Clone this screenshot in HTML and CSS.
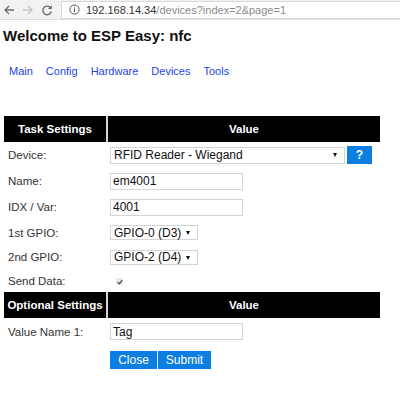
FILE: index.html
```html
<!DOCTYPE html>
<html>
<head>
<meta charset="utf-8">
<link rel="stylesheet" href="styles.css">
</head>
<body>
<div class="chrome">
  <svg class="nav-ico" width="12" height="12" viewBox="0 0 12 12"><path d="M11 6H2M6 2L2 6l4 4" fill="none" stroke="#6b6b6b" stroke-width="1.3"/></svg>
  <svg class="nav-ico fwd" width="12" height="12" viewBox="0 0 12 12"><path d="M1 6h9M6 2l4 4-4 4" fill="none" stroke="#c4c4c4" stroke-width="1.3"/></svg>
  <svg class="nav-ico" width="12" height="12" viewBox="0 0 12 12"><path d="M10 4.5A4.3 4.3 0 1 0 10.3 7.5" fill="none" stroke="#6b6b6b" stroke-width="1.3"/><path d="M10.8 1.2v3.8H7z" fill="#6b6b6b"/></svg>
  <div class="url">
    <svg width="11" height="11" viewBox="0 0 11 11"><circle cx="5.5" cy="5.5" r="4.6" fill="none" stroke="#555" stroke-width="1"/><path d="M5.5 4.6v3.6M5.5 2.6v1" stroke="#555" stroke-width="1.1"/></svg>
    <span class="host">192.168.14.34</span><span class="path">/devices?index=2&amp;page=1</span>
  </div>
</div>
<div class="page">
  <h1>Welcome to ESP Easy: nfc</h1>
  <nav class="menu">
    <a href="#">Main</a><a href="#">Config</a><a href="#">Hardware</a><a href="#">Devices</a><a href="#">Tools</a>
  </nav>
  <table class="settings">
    <tr class="head"><th class="c1">Task Settings</th><th>Value</th></tr>
    <tr class="r-dev"><td class="lbl">Device:</td><td><span class="sel wide">RFID Reader - Wiegand</span><button class="btn help">?</button></td></tr>
    <tr class="r-name"><td class="lbl">Name:</td><td><input class="txt" value="em4001"></td></tr>
    <tr class="r-idx"><td class="lbl">IDX / Var:</td><td><input class="txt" value="4001"></td></tr>
    <tr class="r-g1"><td class="lbl">1st GPIO:</td><td><span class="sel">GPIO-0 (D3)</span></td></tr>
    <tr class="r-g2"><td class="lbl">2nd GPIO:</td><td><span class="sel">GPIO-2 (D4)</span></td></tr>
    <tr class="r-send"><td class="lbl">Send Data:</td><td><span class="chk"><svg width="6" height="6" viewBox="0 0 6 6"><path d="M0.8 3.2l1.6 1.6L5.3 1" fill="none" stroke="#444" stroke-width="1.2"/></svg></span></td></tr>
    <tr class="head"><th class="c1">Optional Settings</th><th>Value</th></tr>
    <tr class="r-vn"><td class="lbl">Value Name 1:</td><td><input class="txt" value="Tag"></td></tr>
    <tr class="r-btn"><td></td><td><button class="btn">Close</button><button class="btn">Submit</button></td></tr>
  </table>
</div>
</body>
</html>
```
FILE: styles.css
```css
* { box-sizing: border-box; }
html, body { margin: 0; padding: 0; background: #fff; }
body { font-family: "Liberation Sans", Arial, sans-serif; color: #222; width: 400px; height: 395px; overflow: hidden; }

.chrome {
  height: 20px;
  background: #f2f2f2;
  border-bottom: 1px solid #dcdcdc;
  display: flex;
  align-items: center;
  padding-left: 3px;
}
.nav-ico { margin-right: 7px; flex: none; }
.url {
  margin-left: 1px;
  flex: 1;
  height: 18px;
  background: #fff;
  border: 1px solid #d8d8d8;
  border-right: none;
  display: flex;
  align-items: center;
  padding-left: 7px;
  font-size: 11px;
}
.url svg { margin-right: 6px; }
.host { color: #333; }
.path { color: #8a8a8a; }

.page { padding: 0 4px; }
h1 {
  margin: 7px 0 0 -1px;
  font-size: 15px;
  font-weight: bold;
  color: #111;
  line-height: 18px;
}
.menu {
  margin-top: 19px;
  padding-left: 5px;
  display: flex;
  gap: 13px;
  font-size: 11px;
  line-height: 14px;
}
.menu a { color: #2443e8; text-decoration: none; }

.settings {
  margin-top: 38px;
  border-collapse: separate;
  border-spacing: 0;
  width: 376px;
  font-size: 11.5px;
}
.head th {
  background: #000;
  color: #fff;
  font-weight: bold;
  height: 26px;
  padding: 0;
  text-align: center;
  font-size: 11.5px;
  border-left: 2px solid #d4d4d4;
}
.head th.c1 { width: 102px; border-left: none; }
td { padding: 0 0 0 4px; vertical-align: middle; white-space: nowrap; }
td.lbl { color: #333; }
.r-dev td { height: 26px; }
.r-name td { height: 26px; }
.r-idx td { height: 26px; }
.r-g1 td { height: 25px; }
.r-g2 td { height: 24px; }
.r-send td { height: 23px; }
.r-vn td { height: 27px; }
.r-btn td { height: 30px; vertical-align: top; padding-top: 6px; }

.sel {
  display: inline-flex;
  align-items: center;
  position: relative;
  width: 88px;
  height: 15px;
  border: 1px solid #d4d4d4;
  padding-left: 3px;
  color: #111;
  font-size: 12px;
  vertical-align: middle;
}
.sel::after {
  content: "";
  position: absolute;
  right: 7px;
  top: 5px;
  border-left: 2.5px solid transparent;
  border-right: 2.5px solid transparent;
  border-top: 4px solid #111;
}
.sel.wide { width: 235px; height: 17px; }
.txt {
  width: 133px;
  height: 17px;
  border: 1px solid #d4d4d4;
  padding: 0 0 0 2px;
  font-family: inherit;
  font-size: 12px;
  color: #111;
  vertical-align: middle;
}
.btn {
  background: #0c7ee0;
  color: #fff;
  border: none;
  font-family: inherit;
  font-size: 12px;
  height: 18px;
  padding: 0;
  width: 47px;
  margin-right: 1px;
  vertical-align: middle;
}
.btn + .btn { width: 53px; }
.help { width: 25px; margin-left: 2px; font-weight: bold; }
.chk {
  display: inline-flex;
  align-items: center;
  justify-content: center;
  width: 7px;
  height: 7px;
  margin-left: 6px;
  background: #e8e8e8;
  border-radius: 1px;
}
```
